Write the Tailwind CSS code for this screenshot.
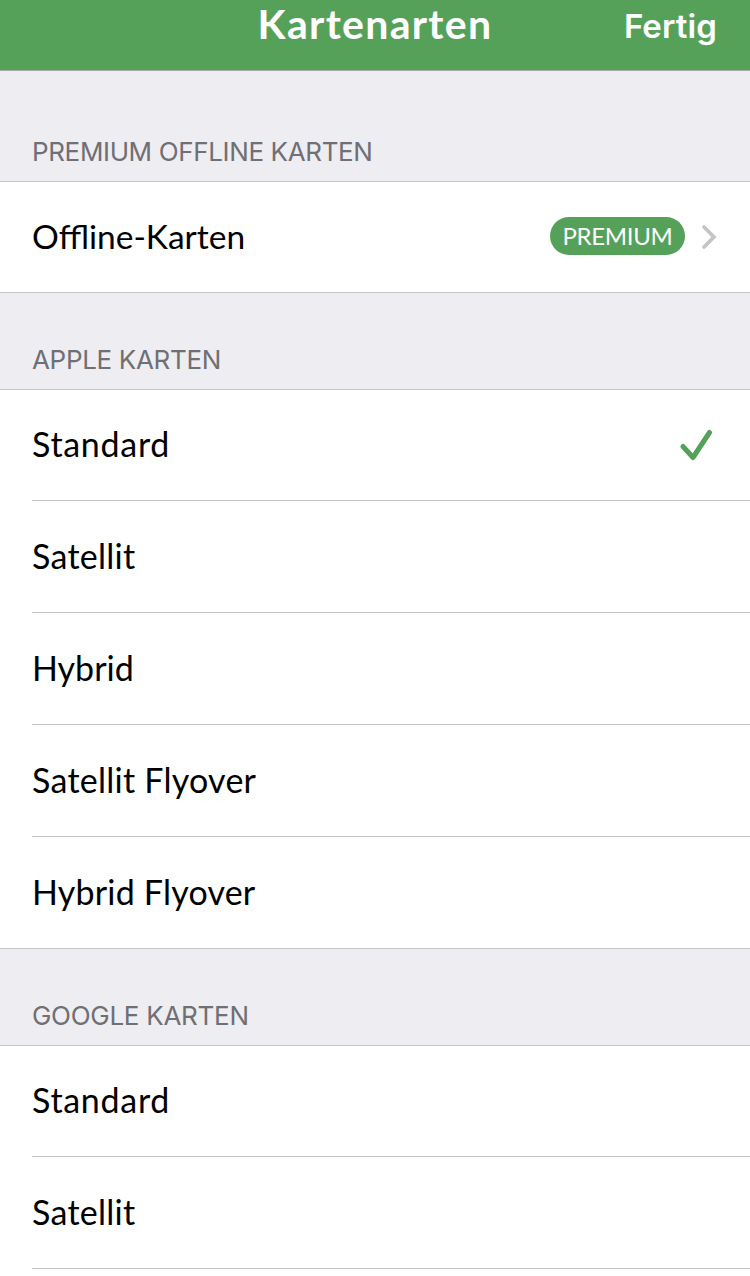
<!DOCTYPE html>
<html lang="de">

<head>
    <meta charset="UTF-8">
    <meta name="viewport" content="width=device-width, initial-scale=1.0">
    <title>Kartenarten</title>
    <script src="https://cdn.jsdelivr.net/npm/@tailwindcss/browser@4"></script>
</head>

<body class="h-[1276px] overflow-hidden bg-white font-['Lato',sans-serif] text-[34px] leading-[48px] text-black">
    <header class="grid grid-cols-[1fr_auto_1fr] h-[71px] bg-[#55a15a] border-b border-[#a5a9a6] text-white">
        <h1 class="col-start-2 text-[41px] font-bold tracking-[1.3px]">Kartenarten</h1>
        <button class="justify-self-end h-[52px] pr-[33px] font-['Inter',sans-serif] text-[33px] font-semibold tracking-[0.1px]">Fertig</button>
    </header>

    <section>
        <h2 class="flex items-end h-[111px] pl-8 pb-[9px] bg-[#eeedf2] border-b border-[#c4c4c7] font-['Inter',sans-serif] text-[26px] leading-10 tracking-[-0.36px] text-[#6f6f74]">PREMIUM OFFLINE KARTEN</h2>
        <div class="flex items-center h-[111px] pl-8 pr-[33px] pb-0.5 border-b border-[#c4c4c7]">
            <span class="text-[33.5px]">Offline-Karten</span>
            <span class="flex items-center justify-center w-[135px] h-[38px] ml-auto rounded-full bg-[#55a15a] text-2xl tracking-[-0.3px] text-white">PREMIUM</span>
            <svg class="w-4 h-[26px] mt-0.5 ml-4" viewBox="0 0 16 26" fill="none" stroke="#c4c4c7" stroke-width="3.6" stroke-linecap="round" stroke-linejoin="miter">
                <path d="M3 3L13 13L3 23" />
            </svg>
        </div>
    </section>

    <section>
        <h2 class="flex items-end h-[97px] pl-8 pb-[9px] bg-[#eeedf2] border-b border-[#c4c4c7] font-['Inter',sans-serif] text-[26px] leading-10 tracking-[-0.33px] text-[#6f6f74]">APPLE KARTEN</h2>
        <ul class="border-b border-[#c4c4c7]">
            <li class="flex items-center justify-between h-[111px] ml-8 pr-[37px] pb-0.5 border-b border-[#c4c4c7]">
                <span class="tracking-[0.7px]">Standard</span>
                <svg class="w-[34px] h-8 mt-0.5" viewBox="0 0 34 32" fill="none" stroke="#55a15a" stroke-width="5" stroke-linecap="round" stroke-linejoin="round">
                    <path d="M4 17.5L14 28.5L30.5 3.5" />
                </svg>
            </li>
            <li class="flex items-center h-28 ml-8 pb-0.5 border-b border-[#c4c4c7] tracking-[0.25px]">Satellit</li>
            <li class="flex items-center h-28 ml-8 pb-0.5 border-b border-[#c4c4c7]">Hybrid</li>
            <li class="flex items-center h-28 ml-8 pb-0.5 border-b border-[#c4c4c7] tracking-[0.25px]">Satellit Flyover</li>
            <li class="flex items-center h-[111px] ml-8 pb-0.5 tracking-[0.2px]">Hybrid Flyover</li>
        </ul>
    </section>

    <section>
        <h2 class="flex items-end h-[97px] pl-8 pb-[9px] bg-[#eeedf2] border-b border-[#c4c4c7] font-['Inter',sans-serif] text-[26px] leading-10 tracking-[-0.28px] text-[#6f6f74]">GOOGLE KARTEN</h2>
        <ul>
            <li class="flex items-center h-[111px] ml-8 pb-0.5 border-b border-[#c4c4c7] tracking-[0.7px]">Standard</li>
            <li class="flex items-center h-28 ml-8 pb-0.5 border-b border-[#c4c4c7] tracking-[0.25px]">Satellit</li>
        </ul>
    </section>
</body>

</html>
